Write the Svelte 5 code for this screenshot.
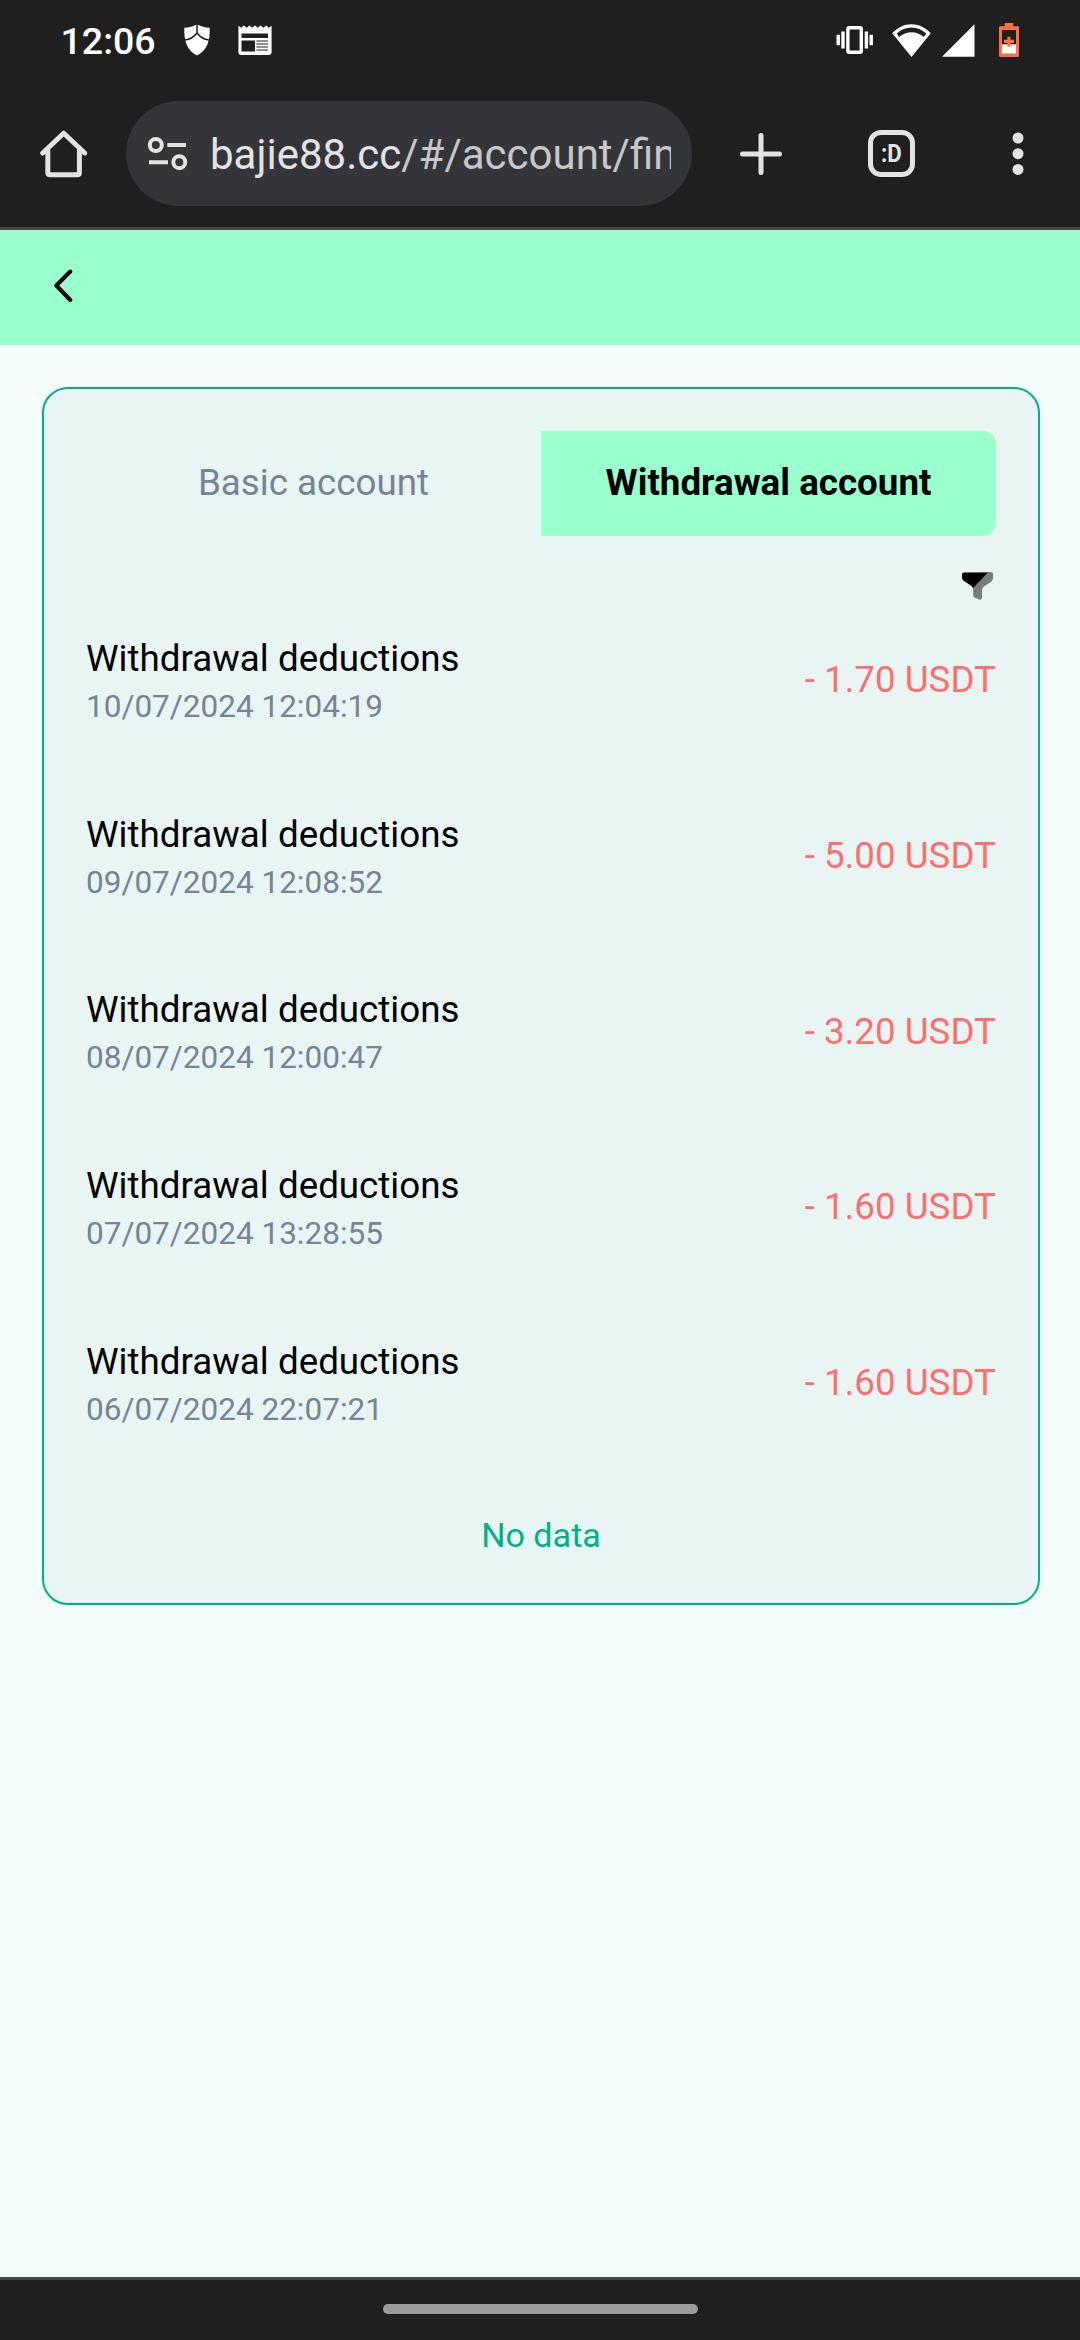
<script>
  const tabs = ['Basic account', 'Withdrawal account'];

  const records = [
    { title: 'Withdrawal deductions', date: '10/07/2024 12:04:19', amount: '- 1.70 USDT' },
    { title: 'Withdrawal deductions', date: '09/07/2024 12:08:52', amount: '- 5.00 USDT' },
    { title: 'Withdrawal deductions', date: '08/07/2024 12:00:47', amount: '- 3.20 USDT' },
    { title: 'Withdrawal deductions', date: '07/07/2024 13:28:55', amount: '- 1.60 USDT' },
    { title: 'Withdrawal deductions', date: '06/07/2024 22:07:21', amount: '- 1.60 USDT' },
  ];

  let activeTab = $state(1);
</script>

<div class="screen">
  <header class="chrome">
    <div class="status-bar">
      <span class="clock">12:06</span>
      <svg class="shield" width="26" height="32" viewBox="0 0 26 32">
        <path fill="#fff" d="M13 0.3C9 2.6 5 3.6 0.3 3.8C0 17 2.5 26 13 31.5C23.5 26 26 17 25.7 3.8C21 3.6 17 2.6 13 0.3Z" />
        <path fill="none" stroke="#1f1f1f" stroke-width="1.5" d="M13 0V9M1 16C6 15.4 10 13 13 9C16 13 20 15.4 25 16" />
      </svg>
      <svg class="news" width="34" height="30" viewBox="0 0 34 30">
        <path fill="#fff" d="M0.4 0.8L3 2.8L5.8 0.5L8.6 2.8L11.4 0.5L14.2 2.8L17 0.5L19.8 2.8L22.6 0.5L25.4 2.8L28.2 0.5L31 2.8L33.6 0.8V27Q33.6 30 30.6 30H3.4Q0.4 30 0.4 27Z" />
        <path fill="#1f1f1f" d="M3.5 8.5H30V13H3.5ZM3.5 15.5H17V26.5H3.5Z" />
        <path stroke="#1f1f1f" stroke-width="1.2" d="M18.5 16H30M18.5 19H30M18.5 22H30M18.5 25H30" />
      </svg>
      <span class="spacer"></span>
      <svg class="vibrate" width="38" height="28" viewBox="0 0 38 28">
        <rect x="11.9" y="1.8" width="13.4" height="24.4" rx="1.5" fill="none" stroke="#fff" stroke-width="3.4" />
        <path stroke="#fff" stroke-width="3.4" d="M2.2 8.8V19.2M7 5.6V22.4M30.4 5.6V22.4M35.2 8.8V19.2" />
      </svg>
      <svg class="wifi" width="39" height="33" viewBox="0 0 39 33">
        <path fill="#fff" fill-rule="evenodd" d="M19.5 0.2C12 0.2 5.4 3.6 0.2 9.2L19.5 33L38.8 9.2C33.6 3.6 27 0.2 19.5 0.2ZM4.7 9.6C9 5.7 14 3.5 19.5 3.5C25 3.5 30 5.7 34.3 9.6L31.8 12.9C28.2 9.9 24 8.2 19.5 8.2C15 8.2 10.8 9.9 7.2 12.9Z" />
      </svg>
      <svg class="signal" width="33" height="33" viewBox="0 0 33 33">
        <path fill="#fff" d="M32.5 0.2V32.7H0Z" />
      </svg>
      <svg class="battery" width="20" height="34" viewBox="0 0 20 34">
        <path fill="#ff6f43" fill-rule="evenodd" d="M5.7 0H14.2V3.3H18.7Q20 3.3 20 4.6V32.7Q20 34 18.7 34H1.3Q0 34 0 32.7V4.6Q0 3.3 1.3 3.3H5.7ZM3 7V30.7H17V7Z" />
        <path fill="#fff" d="M3 21.3H17V30.7H3Z" />
        <path stroke="#ff6f43" stroke-width="3.2" d="M10 13.7V23.7M5 18.4H15" />
      </svg>
    </div>

    <div class="toolbar">
      <svg class="home" width="48" height="48" viewBox="0 0 48 48">
        <path fill="none" stroke="#e3e3e3" stroke-width="5" stroke-linejoin="round" stroke-linecap="round" d="M2.7 23L23.7 3.2L44.7 23M7.8 20V42.5Q7.8 44.7 10 44.7H37.2Q39.4 44.7 39.4 42.5V20" />
      </svg>
      <div class="address">
        <svg class="tune" width="40" height="34" viewBox="0 0 40 34">
          <g fill="none" stroke="#e3e3e3" stroke-width="4">
            <circle cx="7.8" cy="8" r="6" />
            <circle cx="31.3" cy="25.2" r="6" />
            <path d="M19.3 8H38M1 25.2H20" />
          </g>
        </svg>
        <span class="url">bajie88.cc<span class="path">/#/account/fin</span></span>
      </div>
      <svg class="plus" width="42" height="42" viewBox="0 0 42 42">
        <path stroke="#e3e3e3" stroke-width="5" stroke-linecap="round" d="M21 2.5V39.5M2.5 21H39.5" />
      </svg>
      <div class="tab-switcher"><span>:D</span></div>
      <svg class="more" width="12" height="44" viewBox="0 0 12 44">
        <g fill="#e3e3e3">
          <circle cx="6" cy="6" r="5.5" />
          <circle cx="6" cy="21.7" r="5.5" />
          <circle cx="6" cy="37.4" r="5.5" />
        </g>
      </svg>
    </div>
  </header>

  <nav class="nav-bar">
    <svg width="20" height="34" viewBox="0 0 20 34">
      <path fill="none" stroke="#000" stroke-width="4" stroke-linecap="round" stroke-linejoin="round" d="M16.3 2.5L2.3 16.5L16.3 31" />
    </svg>
  </nav>

  <main>
    <section class="card">
      <div class="tabs">
        {#each tabs as tab, i}
          <button class="tab" class:active={i === activeTab} onclick={() => (activeTab = i)}>{tab}</button>
        {/each}
      </div>

      <div class="filter">
        <svg width="31" height="28" viewBox="0 0 31 28">
          <path fill="#767c7a" d="M2 0H29Q31 0 31 2V6Q31 8.5 29 10L22.5 14Q20 16 20 18V26Q19.5 28.5 17 27.5L12.5 25.5Q11.2 25 11.2 23V15.5L25 0.6Z" />
          <path fill="#000" d="M2 0.6H25.8L11 16.2L9.5 14L2 9Q0 7.5 0 5.5V2.5Q0 0.6 2 0.6Z" />
        </svg>
      </div>

      <ul class="records">
        {#each records as record}
          <li>
            <div>
              <div class="title">{record.title}</div>
              <div class="date">{record.date}</div>
            </div>
            <span class="amount">{record.amount}</span>
          </li>
        {/each}
      </ul>

      <p class="empty">No data</p>
    </section>
  </main>

  <footer class="gesture-bar"><span class="handle"></span></footer>
</div>

<style>
  :global(body) {
    margin: 0;
  }

  .screen {
    width: 1080px;
    height: 2340px;
    display: flex;
    flex-direction: column;
    overflow: hidden;
    background: #f3fdf9;
    font-family: Roboto, sans-serif;
    color: #000;
  }

  svg {
    display: block;
    flex-shrink: 0;
  }

  /* Browser chrome */
  .chrome {
    box-sizing: border-box;
    height: 230px;
    background: #1f1f1f;
    border-bottom: 3px solid #484848;
  }

  .status-bar {
    box-sizing: border-box;
    height: 80px;
    padding: 0 61px 0 60.5px;
    display: flex;
    align-items: center;
  }

  .clock {
    width: 123.5px;
    font-size: 37.5px;
    font-weight: 500;
    line-height: 80px;
    color: #fff;
    padding-top: 2px;
  }

  .news {
    margin-left: 28px;
  }

  .spacer {
    flex: 1;
  }

  .wifi {
    margin-left: 18px;
  }

  .signal {
    margin-left: 11px;
  }

  .battery {
    margin-left: 24px;
  }

  .toolbar {
    box-sizing: border-box;
    height: 147px;
    padding: 21px 56px 21px 40px;
    display: flex;
    align-items: center;
  }

  .address {
    box-sizing: border-box;
    width: 566px;
    height: 105px;
    margin-left: 38px;
    padding: 0 21px 0 22px;
    display: flex;
    align-items: center;
    border-radius: 53px;
    background: #343539;
  }

  .url {
    flex: 1;
    margin-left: 22px;
    padding-top: 3px;
    overflow: hidden;
    white-space: nowrap;
    font-size: 42px;
    line-height: 60px;
    color: #e3e3e3;
  }

  .path {
    color: #c7c7c7;
  }

  .plus {
    margin-left: 48px;
  }

  .tab-switcher {
    box-sizing: border-box;
    width: 47px;
    height: 47px;
    margin-left: 86px;
    display: flex;
    justify-content: center;
    border: 5px solid #e3e3e3;
    border-radius: 13px;
    font-size: 26.5px;
    font-weight: 700;
    line-height: 36px;
    color: #e3e3e3;
  }

  .tab-switcher span {
    transform: scaleX(0.84);
  }

  .more {
    margin-left: auto;
  }

  /* Page */
  .nav-bar {
    box-sizing: border-box;
    height: 115px;
    padding: 0 54px 3px;
    display: flex;
    align-items: center;
    background: #99ffcc;
  }

  main {
    flex: 1;
    padding: 42px 40px 0 42px;
  }

  .card {
    box-sizing: border-box;
    height: 1218px;
    padding: 42px;
    border: 2px solid #00b087;
    border-radius: 26px;
    background: #e9f5f3;
  }

  .tabs {
    display: grid;
    grid-template-columns: 1fr 1fr;
    height: 105px;
  }

  .tab {
    padding: 0 0 2px;
    border: 0;
    background: none;
    font-family: inherit;
    font-size: 36.75px;
    color: #768498;
  }

  .tab.active {
    border-radius: 0 13px 13px 0;
    background: #99ffcc;
    font-weight: 700;
    color: #000;
  }

  .filter {
    display: flex;
    justify-content: flex-end;
    height: 61px;
    padding: 36px 3px 0 0;
  }

  .records {
    display: flex;
    flex-direction: column;
    gap: 80.7px;
    margin: 0;
    padding: 0;
    list-style: none;
  }

  .records li {
    display: flex;
    align-items: center;
    justify-content: space-between;
  }

  .title {
    font-size: 36.75px;
    line-height: 52.5px;
  }

  .date {
    padding-top: 0.5px;
    font-size: 31.5px;
    line-height: 42px;
    color: #768498;
  }

  .amount {
    font-size: 36.75px;
    line-height: 52.5px;
    color: #fa7070;
  }

  .empty {
    margin: 82px 0 0;
    font-size: 34.125px;
    line-height: 44px;
    text-align: center;
    color: #00b087;
  }

  .gesture-bar {
    box-sizing: border-box;
    height: 63px;
    padding-top: 24px;
    display: flex;
    justify-content: center;
    border-top: 3px solid #444947;
    background: #1f1f1f;
  }

  .handle {
    width: 315px;
    height: 10px;
    border-radius: 5px;
    background: #9b9b9b;
  }
</style>
